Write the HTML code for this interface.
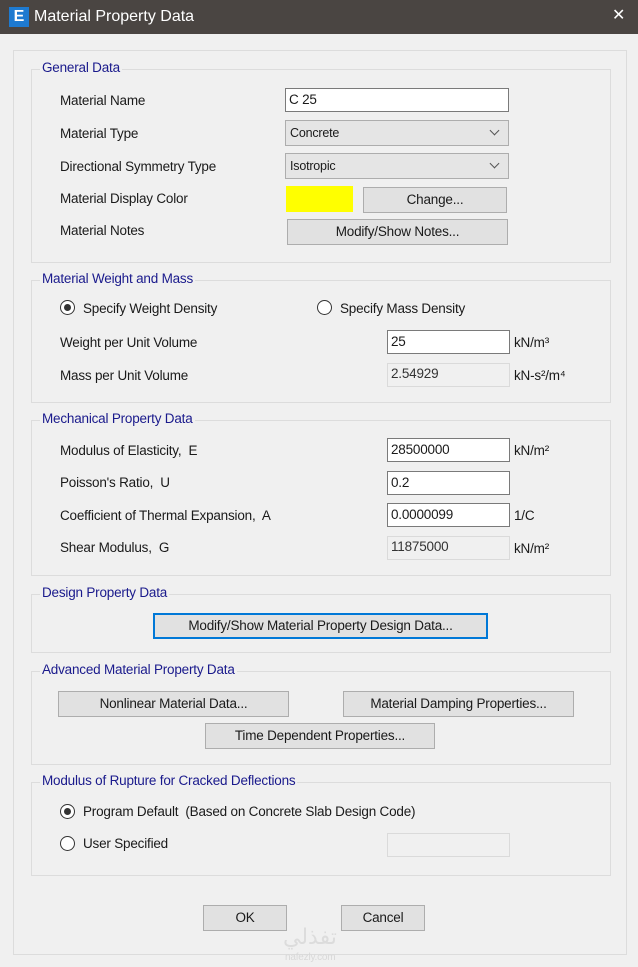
<!DOCTYPE html>
<html><head><meta charset="utf-8"><style>
*{box-sizing:border-box;margin:0;padding:0}
body{width:638px;height:967px;background:#f0f0f0;position:relative;overflow:hidden;font-family:"Liberation Sans",sans-serif;font-size:13.5px;color:#1a1a1a;letter-spacing:-0.2px}
.a{position:absolute}
.title{left:0;top:0;width:638px;height:34px;background:#4a4542;color:#fff;font-size:16px;letter-spacing:0}
.grp{position:absolute;border:1px solid #dcdcdc;left:31px;width:580px}
.gt{position:absolute;left:8px;top:-10px;background:#f0f0f0;color:#1a1a8c;padding:0 2px}
.in{position:absolute;height:24px;background:#fff;border:1px solid #7a7a7a;padding:3px 0 0 3px}
.ro{position:absolute;height:24px;background:#f0f0f0;border:1px solid #dadada;padding:2px 0 0 3px;color:#333}
.btn{position:absolute;height:26px;background:#e1e1e1;border:1px solid #adadad;text-align:center;line-height:24px}
.cb{position:absolute;height:26px;background:#e5e5e5;border:1px solid #adadad;padding:5px 0 0 4px;font-size:12.5px}
.cb:after{content:"";position:absolute;right:10px;top:6px;width:6px;height:6px;border-right:1.3px solid #555;border-bottom:1.3px solid #555;transform:rotate(45deg)}
.rad{position:absolute;width:15px;height:15px;border:1px solid #333;border-radius:50%;background:#fff}
.rad.on:after{content:"";position:absolute;left:3px;top:3px;width:7px;height:7px;border-radius:50%;background:#333}
</style></head><body>
<div class="a title">
 <div class="a" style="left:9px;top:7px;width:20px;height:20px;background:#1e7ad0;color:#fff;font-weight:bold;font-size:16px;text-align:center;line-height:20px">E</div>
 <div class="a" style="left:34px;top:8px">Material Property Data</div>
 <div class="a" style="left:612px;top:5px;font-size:16px">✕</div>
</div>
<div class="a" style="left:13px;top:50px;width:614px;height:905px;border:1px solid #dcdcdc"></div>

<div class="grp" style="top:69px;height:194px"><div class="gt">General Data</div></div>
<div class="a" style="left:60px;top:93px">Material Name</div>
<div class="a" style="left:60px;top:126px">Material Type</div>
<div class="a" style="left:60px;top:159px">Directional Symmetry Type</div>
<div class="a" style="left:60px;top:191px">Material Display Color</div>
<div class="a" style="left:60px;top:223px">Material Notes</div>
<div class="in" style="left:285px;top:88px;width:224px">C 25</div>
<div class="cb" style="left:285px;top:120px;width:224px">Concrete</div>
<div class="cb" style="left:285px;top:153px;width:224px">Isotropic</div>
<div class="a" style="left:286px;top:186px;width:67px;height:26px;background:#ffff00"></div>
<div class="btn" style="left:363px;top:187px;width:144px">Change...</div>
<div class="btn" style="left:287px;top:219px;width:221px">Modify/Show Notes...</div>

<div class="grp" style="top:280px;height:123px"><div class="gt">Material Weight and Mass</div></div>
<div class="rad on" style="left:60px;top:300px"></div>
<div class="a" style="left:83px;top:301px">Specify Weight Density</div>
<div class="rad" style="left:317px;top:300px"></div>
<div class="a" style="left:340px;top:301px">Specify Mass Density</div>
<div class="a" style="left:60px;top:335px">Weight per Unit Volume</div>
<div class="a" style="left:60px;top:368px">Mass per Unit Volume</div>
<div class="in" style="left:387px;top:330px;width:123px">25</div>
<div class="a" style="left:514px;top:335px">kN/m³</div>
<div class="ro" style="left:387px;top:363px;width:123px">2.54929</div>
<div class="a" style="left:514px;top:368px">kN-s²/m⁴</div>

<div class="grp" style="top:420px;height:156px"><div class="gt">Mechanical Property Data</div></div>
<div class="a" style="left:60px;top:443px">Modulus of Elasticity,&nbsp; E</div>
<div class="a" style="left:60px;top:475px">Poisson's Ratio,&nbsp; U</div>
<div class="a" style="left:60px;top:508px">Coefficient of Thermal Expansion,&nbsp; A</div>
<div class="a" style="left:60px;top:540px">Shear Modulus,&nbsp; G</div>
<div class="in" style="left:387px;top:438px;width:123px">28500000</div>
<div class="a" style="left:514px;top:443px">kN/m²</div>
<div class="in" style="left:387px;top:471px;width:123px">0.2</div>
<div class="in" style="left:387px;top:503px;width:123px">0.0000099</div>
<div class="a" style="left:514px;top:508px">1/C</div>
<div class="ro" style="left:387px;top:536px;width:123px">11875000</div>
<div class="a" style="left:514px;top:541px">kN/m²</div>

<div class="grp" style="top:594px;height:59px"><div class="gt">Design Property Data</div></div>
<div class="btn" style="left:153px;top:613px;width:335px;border:2px solid #0078d7;line-height:22px">Modify/Show Material Property Design Data...</div>

<div class="grp" style="top:671px;height:94px"><div class="gt">Advanced Material Property Data</div></div>
<div class="btn" style="left:58px;top:691px;width:231px">Nonlinear Material Data...</div>
<div class="btn" style="left:343px;top:691px;width:231px">Material Damping Properties...</div>
<div class="btn" style="left:205px;top:723px;width:230px">Time Dependent Properties...</div>

<div class="grp" style="top:782px;height:94px"><div class="gt">Modulus of Rupture for Cracked Deflections</div></div>
<div class="rad on" style="left:60px;top:804px"></div>
<div class="a" style="left:83px;top:804px">Program Default&nbsp; (Based on Concrete Slab Design Code)</div>
<div class="rad" style="left:60px;top:836px"></div>
<div class="a" style="left:83px;top:836px">User Specified</div>
<div class="ro" style="left:387px;top:833px;width:123px"></div>

<div class="btn" style="left:203px;top:905px;width:84px">OK</div>
<div class="btn" style="left:341px;top:905px;width:84px">Cancel</div>
<div class="a" style="left:283px;top:925px;color:#dcdcdc;font-size:22px;font-family:'DejaVu Sans',sans-serif">تفذلي</div>
<div class="a" style="left:285px;top:952px;color:#d8d8d8;font-size:10px">nafezly.com</div>
</body></html>
